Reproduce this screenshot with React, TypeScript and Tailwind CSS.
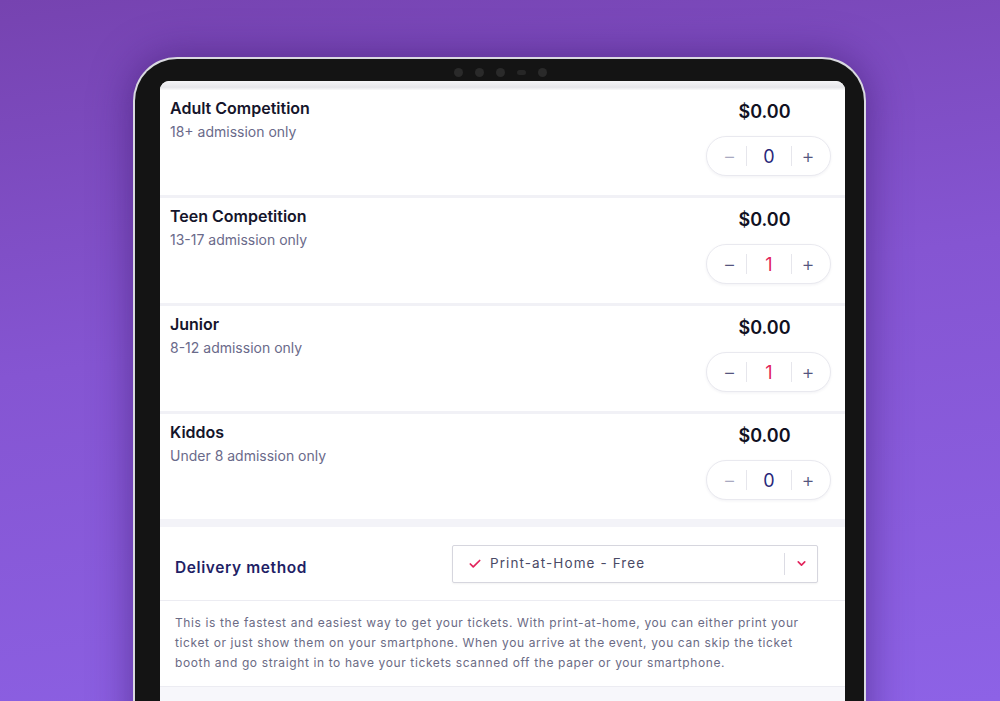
import { Check, ChevronDown } from 'lucide-react';

const tickets = [
  { name: 'Adult Competition', note: '18+ admission only', qty: 0 },
  { name: 'Teen Competition', note: '13-17 admission only', qty: 1 },
  { name: 'Junior', note: '8-12 admission only', qty: 1 },
  { name: 'Kiddos', note: 'Under 8 admission only', qty: 0 },
];

const Stepper = ({ qty }: { qty: number }) => (
  <div className="flex h-[40px] w-[125px] items-center rounded-full border border-[#e9e9ef] bg-white shadow-[0_1px_3px_rgba(30,30,80,0.06)]">
    <span className={`flex w-[39px] justify-center pl-[6px] text-[20px] leading-none font-light ${qty > 0 ? 'text-[#55557e]' : 'text-[#a9a9c0]'}`}>−</span>
    <span className="h-[20px] w-px bg-[#e6e6ec]" />
    <span className={`flex w-[44px] justify-center text-[18px] font-normal ${qty > 0 ? 'text-[#e2245c]' : 'text-[#28287a]'}`}>{qty}</span>
    <span className="h-[20px] w-px bg-[#e6e6ec]" />
    <span className="flex w-[32px] justify-center text-[20px] leading-none font-light text-[#55557e]">+</span>
  </div>
);

const TicketRow = ({ name, note, qty }: { name: string; note: string; qty: number }) => (
  <div className="flex justify-between pl-[10px] pr-[14px] pt-[10px] pb-[19px]">
    <div>
      <p className="text-[16px] leading-[16px] font-semibold text-[#15152b]">{name}</p>
      <p className="mt-[8px] text-[14px] leading-[16px] text-[#6a6a8a]">{note}</p>
    </div>
    <div className="flex flex-col items-center">
      <p className="pr-[8px] text-[18px] leading-[24px] font-semibold text-[#111122]">$0.00</p>
      <div className="mt-[12px]">
        <Stepper qty={qty} />
      </div>
    </div>
  </div>
);

export default function App() {
  return (
    <div
      className="h-[701px] w-[1000px] overflow-hidden bg-[linear-gradient(172deg,#7643b0_0%,#8555d2_45%,#8d62e6_100%)] pl-[133px] pt-[57px]"
      style={{ fontFamily: 'Inter, "Noto Sans", sans-serif' }}
    >
      {/* device */}
      <div className="flex h-[700px] w-[733px] flex-col rounded-t-[44px] border-[2px] border-b-0 border-[#d9d9e0] bg-[#141414] pl-[25px] pr-[19px] shadow-[0_0_40px_rgba(55,20,100,0.55)]">
        <div className="flex h-[22px] items-start justify-center gap-[12px] pr-[4px] pt-[9px]">
          <span className="h-[9px] w-[9px] rounded-full bg-[#2a2a2a]" />
          <span className="h-[9px] w-[9px] rounded-full bg-[#2a2a2a]" />
          <span className="h-[9px] w-[9px] rounded-full bg-[#2a2a2a]" />
          <span className="mt-[2px] h-[5px] w-[9px] rounded-full bg-[#262626]" />
          <span className="h-[9px] w-[9px] rounded-full bg-[#2a2a2a]" />
        </div>

        {/* screen */}
        <div className="flex-1 overflow-hidden rounded-t-[9px] bg-[#f7f7fb]">
          <div className="h-[9px] bg-[linear-gradient(to_bottom,#f4f4f6,#e6e6ea_70%,#fafafa)]" />
          <div className="bg-white">
            {tickets.map((t, i) => (
              <div key={t.name}>
                {i > 0 && <div className="h-[3px] bg-[#f1f1f6]" />}
                <TicketRow {...t} />
              </div>
            ))}
          </div>
          <div className="h-[8px] bg-[#f3f3f8]" />

          {/* delivery */}
          <div className="flex h-[74px] items-center border-b border-[#ececf2] bg-white pl-[15px]">
            <p className="w-[277px] pt-[8px] text-[15.5px] font-semibold tracking-[0.6px] text-[#1f1f66]">Delivery method</p>
            <div className="flex h-[38px] w-[366px] items-center rounded-[2px] border border-[#d6d6de] bg-white pl-[15px] shadow-[0_1px_2px_rgba(0,0,0,0.05)]">
              <Check size={14} strokeWidth={3} className="text-[#e2245c]" />
              <span className="ml-[8px] flex-1 text-[13.5px] tracking-[1.1px] text-[#4a4a66]">Print-at-Home - Free</span>
              <span className="h-[22px] w-px bg-[#dcdce4]" />
              <span className="flex w-[32px] justify-center">
                <ChevronDown size={13} strokeWidth={3} className="text-[#e2245c]" />
              </span>
            </div>
          </div>
          <div className="border-b border-[#ececf2] bg-white px-[15px] pt-[12px] pb-[13px] text-[12px] leading-[20px] tracking-[0.62px] text-[#6b6b85]">
            This is the fastest and easiest way to get your tickets. With print-at-home, you can either print your
            <br />
            ticket or just show them on your smartphone. When you arrive at the event, you can skip the ticket
            <br />
            booth and go straight in to have your tickets scanned off the paper or your smartphone.
          </div>
        </div>
      </div>
    </div>
  );
}
